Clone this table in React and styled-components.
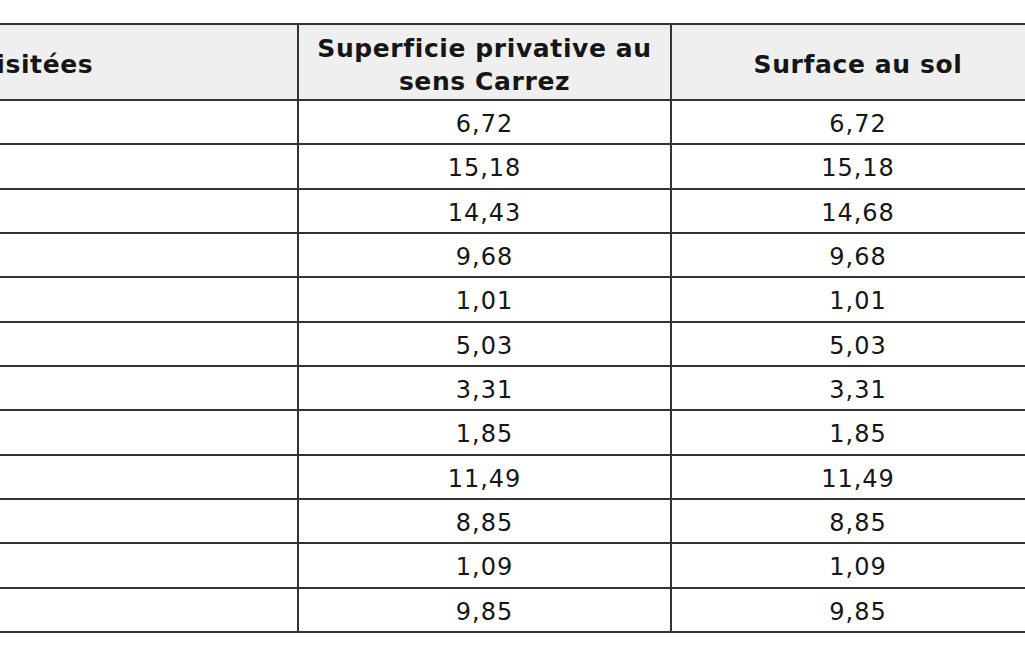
import React from "react";
import styled, { createGlobalStyle } from "styled-components";

const Global = createGlobalStyle`
  html, body {
    margin: 0;
    padding: 0;
    background: #ffffff;
  }
  body {
    font-family: "DejaVu Sans", Verdana, sans-serif;
    color: #161616;
    overflow: hidden;
  }
`;

const Page = styled.div`
  width: 1025px;
  height: 650px;
  overflow: hidden;
  padding-top: 23px;
  box-sizing: border-box;
`;

const Grid = styled.div`
  display: grid;
  grid-template-columns: 455px 371px 372px;
  grid-template-rows: 74px repeat(12, 42.33px);
  gap: 2px;
  padding: 2px;
  background: #333333;
  margin-left: -160px;
  width: max-content;
`;

const HeadCell = styled.div`
  background: #efefef;
  display: flex;
  align-items: center;
  justify-content: ${(p) => (p.$left ? "flex-start" : "center")};
  text-align: ${(p) => (p.$left ? "left" : "center")};
  padding: 5px ${(p) => (p.$left ? "0" : "14px")} 0 ${(p) => (p.$left ? "34px" : "14px")};
  font-weight: bold;
  font-size: 25px;
  letter-spacing: 0.6px;
  line-height: 33px;
  box-sizing: border-box;
`;

const Cell = styled.div`
  background: #ffffff;
  display: flex;
  align-items: center;
  justify-content: center;
  padding-top: 4px;
  font-size: 24px;
  letter-spacing: 1px;
  box-sizing: border-box;
`;

const rows = [
  ["6,72", "6,72"],
  ["15,18", "15,18"],
  ["14,43", "14,68"],
  ["9,68", "9,68"],
  ["1,01", "1,01"],
  ["5,03", "5,03"],
  ["3,31", "3,31"],
  ["1,85", "1,85"],
  ["11,49", "11,49"],
  ["8,85", "8,85"],
  ["1,09", "1,09"],
  ["9,85", "9,85"],
];

export default function App() {
  return (
    <>
      <Global />
      <Page>
        <Grid>
          <HeadCell $left>Pièces visitées</HeadCell>
          <HeadCell>Superficie privative au sens Carrez</HeadCell>
          <HeadCell>Surface au sol</HeadCell>
          {rows.map((r, i) => (
            <React.Fragment key={i}>
              <Cell />
              <Cell>{r[0]}</Cell>
              <Cell>{r[1]}</Cell>
            </React.Fragment>
          ))}
        </Grid>
      </Page>
    </>
  );
}
